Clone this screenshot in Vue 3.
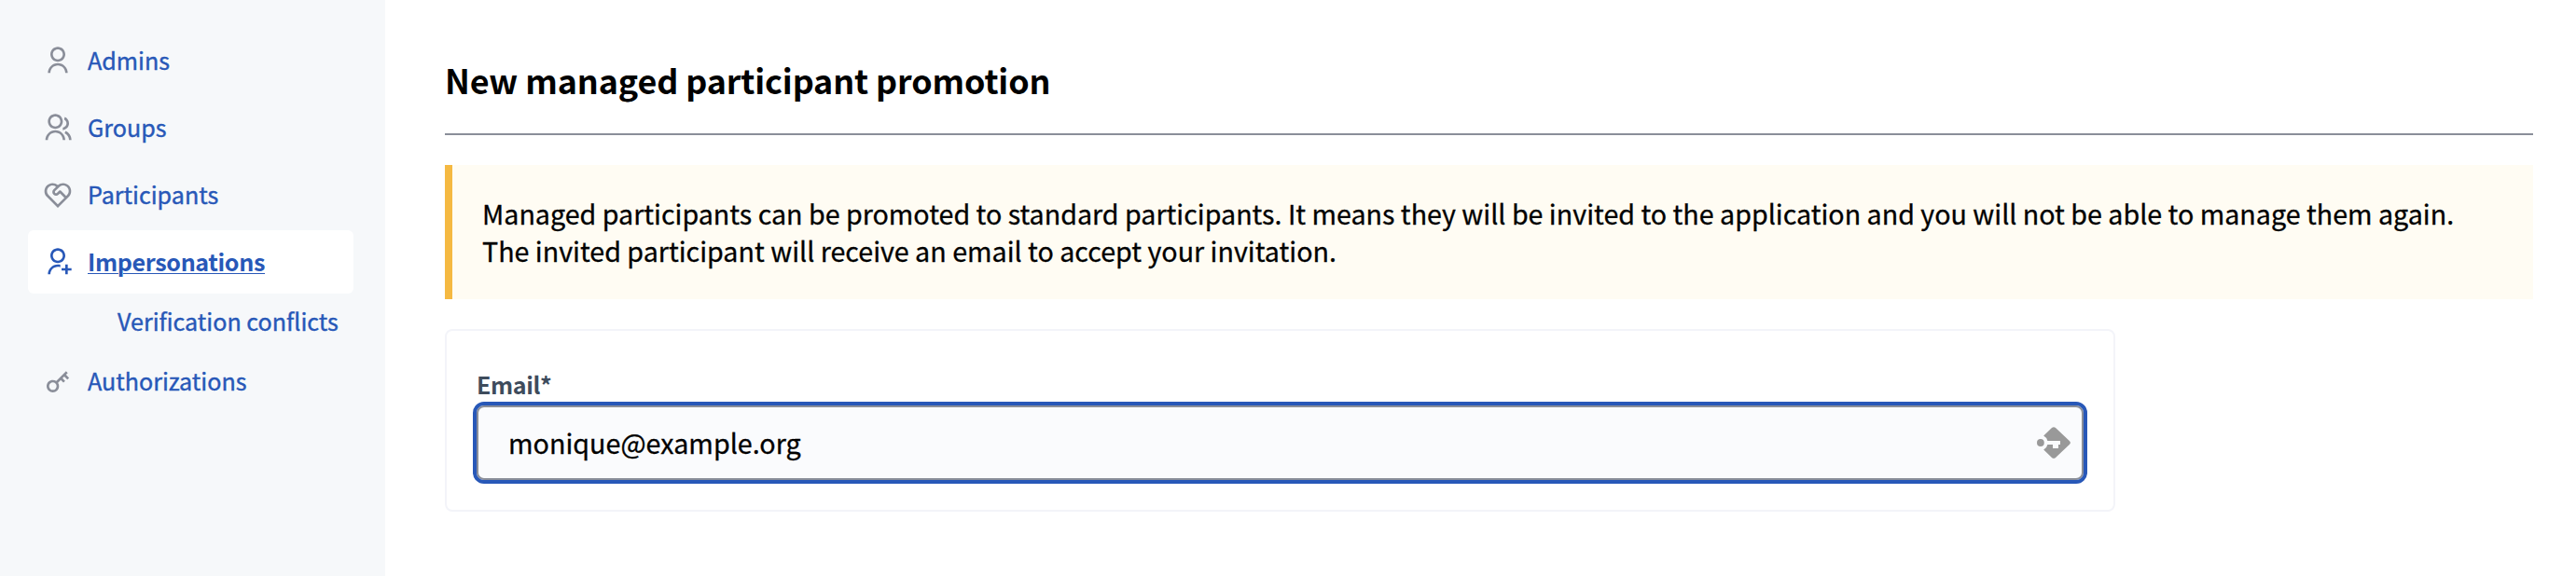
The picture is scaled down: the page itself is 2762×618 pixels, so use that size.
<script setup>
import { ref } from 'vue'

const email = ref('monique@example.org')

const icons = {
  user: 'M4 22C4 17.5817 7.58172 14 12 14C16.4183 14 20 17.5817 20 22H18C18 18.6863 15.3137 16 12 16C8.68629 16 6 18.6863 6 22H4ZM12 13C8.685 13 6 10.315 6 7C6 3.685 8.685 1 12 1C15.315 1 18 3.685 18 7C18 10.315 15.315 13 12 13ZM12 11C14.21 11 16 9.21 16 7C16 4.79 14.21 3 12 3C9.79 3 8 4.79 8 7C8 9.21 9.79 11 12 11Z',
  group: 'M2 22C2 17.5817 5.58172 14 10 14C14.4183 14 18 17.5817 18 22H16C16 18.6863 13.3137 16 10 16C6.68629 16 4 18.6863 4 22H2ZM10 13C6.685 13 4 10.315 4 7C4 3.685 6.685 1 10 1C13.315 1 16 3.685 16 7C16 10.315 13.315 13 10 13ZM10 11C12.21 11 14 9.21 14 7C14 4.79 12.21 3 10 3C7.79 3 6 4.79 6 7C6 9.21 7.79 11 10 11ZM18.2837 14.7028C21.0644 15.9561 23 18.752 23 22H21C21 19.564 19.5483 17.4671 17.4628 16.5271L18.2837 14.7028ZM17.5962 3.41321C19.5944 4.23703 21 6.20361 21 8.5C21 11.3702 18.8042 13.7252 16 13.9776V11.9646C17.6967 11.7222 19 10.264 19 8.5C19 7.11935 18.2016 5.92603 17.041 5.35635L17.5962 3.41321Z',
  heart: 'M3.16113 4.46875C5.58508 2.0448 9.44716 1.9355 12.0008 4.14085C14.5528 1.9355 18.4149 2.0448 20.8388 4.46875C23.2584 6.88836 23.3716 10.741 21.1785 13.2947L12 22.5L2.82141 13.2947C0.628282 10.741 0.741522 6.88836 3.16113 4.46875ZM4.57534 5.88296C2.86819 7.59011 2.81942 10.3276 4.42902 12.0937L12 19.6715L17.3026 14.3675L13.7677 10.8327L12.7071 11.8934C11.5355 13.0649 9.636 13.0649 8.46443 11.8934C7.29286 10.7218 7.29286 8.8223 8.46443 7.65073L10.5656 5.54843C8.85292 4.18516 6.37076 4.23779 4.71676 5.74154L4.57534 5.88296ZM13.0606 8.71139C13.4511 8.32086 14.0843 8.32086 14.4748 8.71139L18.7168 12.9533L19.4246 12.2469C21.1819 10.4896 21.1819 7.64032 19.4246 5.88296C17.7174 4.17581 14.9799 4.12704 13.2139 5.73664L9.87864 9.06494C9.51601 9.42757 9.49011 9.99942 9.80094 10.3919L9.87864 10.4792C10.2413 10.8418 10.8131 10.8677 11.2056 10.5569L13.0606 8.71139Z',
  userAdd: 'M14 14.252V16.3414C13.3744 16.1203 12.7013 16 12 16C8.68629 16 6 18.6863 6 22H4C4 17.5817 7.58172 14 12 14C12.6906 14 13.3608 14.0875 14 14.252ZM12 13C8.685 13 6 10.315 6 7C6 3.685 8.685 1 12 1C15.315 1 18 3.685 18 7C18 10.315 15.315 13 12 13ZM12 11C14.21 11 16 9.21 16 7C16 4.79 14.21 3 12 3C9.79 3 8 4.79 8 7C8 9.21 9.79 11 12 11ZM18 17V14H20V17H23V19H20V22H18V19H15V17H18Z',
  key: 'M10.7577 11.8281L18.6066 3.97919L20.0208 5.3934L18.6066 6.80761L21.0815 9.28249L19.6673 10.6967L17.1924 8.22183L15.7782 9.63604L17.8995 11.7574L16.4853 13.1716L14.364 11.0503L12.1719 13.2423C13.4581 15.1837 13.246 17.8251 11.5355 19.5355C9.58291 21.4882 6.41709 21.4882 4.46447 19.5355C2.51184 17.5829 2.51184 14.4171 4.46447 12.4645C6.17493 10.754 8.81633 10.5419 10.7577 11.8281ZM10.1213 18.1213C11.2929 16.9497 11.2929 15.0503 10.1213 13.8787C8.94975 12.7071 7.05025 12.7071 5.87868 13.8787C4.70711 15.0503 4.70711 16.9497 5.87868 18.1213C7.05025 19.2929 8.94975 19.2929 10.1213 18.1213Z',
}

const items = [
  { label: 'Admins', icon: icons.user },
  { label: 'Groups', icon: icons.group },
  { label: 'Participants', icon: icons.heart },
  { label: 'Impersonations', icon: icons.userAdd, active: true, child: 'Verification conflicts' },
  { label: 'Authorizations', icon: icons.key },
]
</script>

<template>
  <div class="page">
    <nav class="sidebar">
      <template v-for="item in items" :key="item.label">
        <a class="item" :class="{ active: item.active }">
          <svg class="icon" viewBox="0 0 24 24"><path :d="item.icon" /></svg>
          <span class="label">{{ item.label }}</span>
        </a>
        <a v-if="item.child" class="child">{{ item.child }}</a>
      </template>
    </nav>

    <main class="content">
      <h1 class="title">New managed participant promotion</h1>
      <div class="callout">
        <p>Managed participants can be promoted to standard participants. It means they will be invited to the application and you will not be able to manage them again.</p>
        <p>The invited participant will receive an email to accept your invitation.</p>
      </div>
      <form class="card">
        <label class="field-label" for="email">Email*</label>
        <div class="field">
          <input id="email" v-model="email" type="text" autocomplete="off" />
          <svg class="manager" viewBox="0 0 36 36">
            <path class="tile" d="M16 2.1Q18 0.2 20 2.1L34.8 16Q37 18 34.8 20L20 33.9Q18 35.8 16 33.9L7.2 25.6A8.2 8.2 0 0 0 11.4 20H17V24H23V20H25V16H11.4A8.2 8.2 0 0 0 7.2 10.4Z" />
            <circle class="tile" cx="3.9" cy="18" r="3.9" />
          </svg>
        </div>
      </form>
    </main>
  </div>
</template>

<style>
body {
  margin: 0;
  background: #fff;
}
</style>

<style scoped>
.page {
  display: flex;
  height: 618px;
  overflow: hidden;
  font-family: "Noto Sans CJK JP", "Noto Sans", sans-serif;
  color: #000;
}
.sidebar {
  box-sizing: border-box;
  flex: 0 0 413px;
  display: flex;
  flex-direction: column;
  gap: 4px;
  padding: 31px 34px 0 30px;
  background: #f6f8fa;
  font-size: 25.1px;
  color: #2858b8;
  -webkit-text-stroke: 0.4px currentColor;
}
.item {
  flex: none;
  display: flex;
  align-items: center;
  gap: 16px;
  height: 68px;
  padding-left: 16px;
  border-radius: 6px;
}
.icon {
  width: 32px;
  height: 32px;
  fill: #8a8e99;
}
.label {
  line-height: 34px;
  padding-bottom: 2px;
}
.active {
  background: #fff;
  font-weight: 700;
  letter-spacing: -0.35px;
  -webkit-text-stroke: 0;
}
.active .icon {
  fill: #2858b8;
}
.active .label {
  text-decoration: underline;
  text-decoration-thickness: 1px;
  text-underline-offset: 2px;
}
.child {
  height: 48px;
  line-height: 48px;
  padding: 1px 0 3px 96px;
  white-space: nowrap;
}
.content {
  flex: 1;
  padding: 61px 46px 0 64px;
}
.title {
  margin: 0 0 32px;
  padding-bottom: 34px;
  border-bottom: 2px solid #8a8e99;
  font-size: 35.9px;
  line-height: 48px;
  font-weight: 700;
  letter-spacing: -0.12px;
}
.callout {
  padding: 32px;
  border-left: 8px solid #f5b942;
  background: #fffcf3;
  font-size: 28.65px;
  line-height: 40px;
  -webkit-text-stroke: 0.3px currentColor;
}
.callout p {
  margin: 0;
}
.card {
  box-sizing: border-box;
  width: 1791px;
  height: 196px;
  margin-top: 32px;
  padding: 40px 32px 0;
  border: 2px solid #f3f4f9;
  border-radius: 8px;
}
.field-label {
  display: block;
  height: 40px;
  line-height: 34px;
  font-size: 25.07px;
  font-weight: 700;
  letter-spacing: -0.4px;
  color: #3e4c5c;
}
.field {
  box-sizing: border-box;
  display: flex;
  align-items: center;
  height: 80px;
  padding: 0 12px 0 32px;
  border: 2px solid #8a8e99;
  border-radius: 8px;
  outline: 4px solid #2858b8;
  background: #fafbfd;
}
.field input {
  box-sizing: border-box;
  flex: 1;
  min-width: 0;
  height: 72px;
  padding: 0 0 2px;
  border: 0;
  outline: 0;
  background: transparent;
  font-family: inherit;
  font-size: 28.7px;
  color: #000;
  -webkit-text-stroke: 0.3px currentColor;
}
.manager {
  width: 36px;
  height: 36px;
}
.tile {
  fill: #999;
}
</style>
